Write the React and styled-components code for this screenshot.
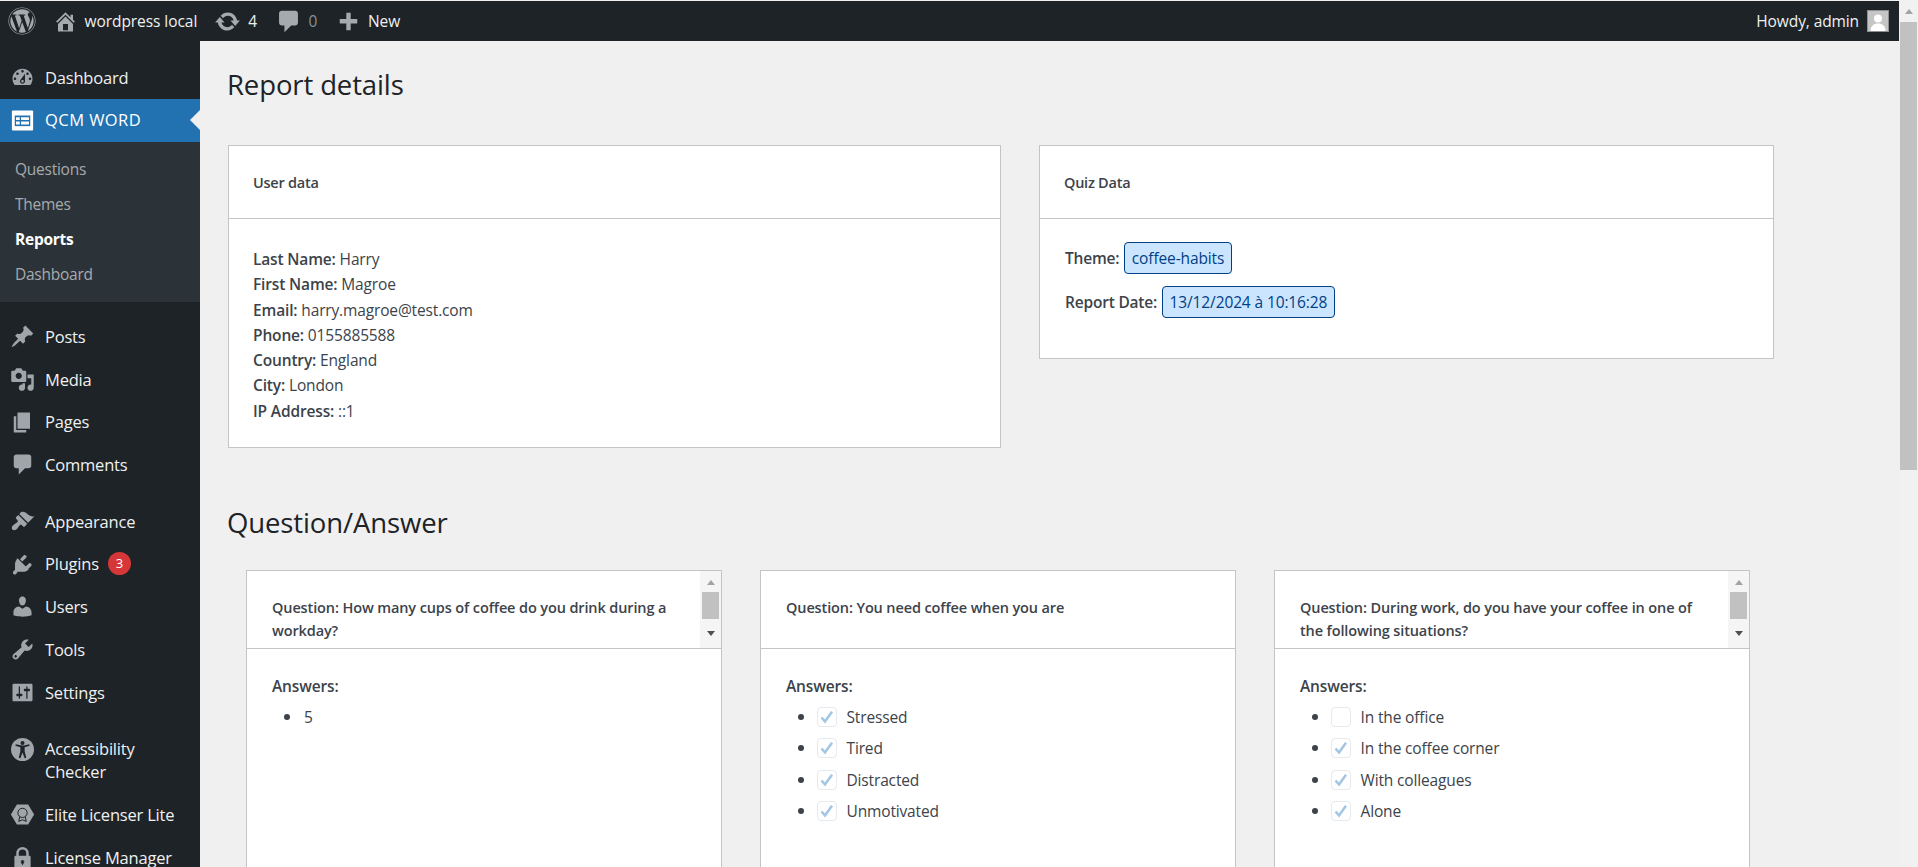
import styled, { createGlobalStyle } from "styled-components";
import { FaWordpress } from "react-icons/fa";

const ICONS = {
  home: "M16 8.5l1.53 1.53-1.06 1.06L10 4.62l-6.47 6.47-1.06-1.06L10 2.5l4 4v-2h2v4zm-6-2.46l6 5.99V18H4v-5.97zM12 17v-5H8v5h4z",
  update: "M10.2 3.28c3.53 0 6.43 2.61 6.92 6h2.08l-3.5 4-3.5-4h2.32c-.45-1.97-2.21-3.45-4.32-3.45-1.45 0-2.73.71-3.54 1.78L4.95 5.66C6.23 4.2 8.11 3.28 10.2 3.28zm-.4 13.44c-3.52 0-6.43-2.61-6.92-6H.8l3.5-4c1.17 1.33 2.33 2.67 3.5 4H5.48c.45 1.97 2.21 3.45 4.32 3.45 1.45 0 2.73-.71 3.54-1.78l1.71 1.95c-1.28 1.46-3.15 2.38-5.25 2.38z",
  comment: "M5 2h10c1.1 0 2 .9 2 2v7c0 1.1-.9 2-2 2h-3l-5 5v-5H5c-1.1 0-2-.9-2-2V4c0-1.1.9-2 2-2z",
  plus: "M17 8v3.5h-5.25V17h-3.5v-5.500H3V8h5.250V3h3.500v5H17z",
  dashboard: "M3.76 16h12.48c1.1-1.37 1.76-3.11 1.76-5 0-4.42-3.58-8-8-8s-8 3.58-8 8c0 1.89.66 3.63 1.76 5zM10 4c.55 0 1 .45 1 1s-.45 1-1 1-1-.45-1-1 .45-1 1-1zM6 6c.55 0 1 .45 1 1s-.45 1-1 1-1-.45-1-1 .45-1 1-1zm8 0c.55 0 1 .45 1 1s-.45 1-1 1-1-.45-1-1 .45-1 1-1zm-5.37 5.55L12 7v6c0 1.1-.9 2-2 2s-2-.9-2-2c0-.57.24-1.08.63-1.45zM4 10c.55 0 1 .45 1 1s-.45 1-1 1-1-.45-1-1 .45-1 1-1zm12 0c.55 0 1 .45 1 1s-.45 1-1 1-1-.45-1-1 .45-1 1-1zm-5 3c0-.55-.45-1-1-1s-1 .45-1 1 .45 1 1 1 1-.45 1-1z",
  post: "M10.44 3.02l1.82-1.82 6.36 6.35-1.83 1.82c-1.05-.68-2.48-.57-3.41.36l-.75.75c-.92.93-1.04 2.35-.35 3.41l-1.83 1.82-2.41-2.41-2.8 2.79c-.42.42-3.38 2.71-3.8 2.29s1.86-3.39 2.28-3.81l2.79-2.79L4.1 9.36l1.83-1.82c1.05.69 2.48.57 3.4-.36l.75-.75c.93-.92 1.05-2.35.36-3.41z",
  media: "M13 11V4c0-.55-.45-1-1-1h-1.67L9 1H5L3.67 3H2c-.55 0-1 .45-1 1v7c0 .55.45 1 1 1h10c.55 0 1-.45 1-1zM7 4.5c1.38 0 2.5 1.12 2.5 2.5S8.38 9.5 7 9.5 4.5 8.38 4.5 7 5.62 4.5 7 4.5zM14 6h5v10.5c0 1.38-1.12 2.5-2.5 2.5S14 17.88 14 16.5s1.12-2.5 2.5-2.5c.17 0 .34.02.5.05V9h-3V6zm-4 8.05V13h2v3.5c0 1.38-1.12 2.5-2.5 2.5S7 17.88 7 16.5 8.12 14 9.5 14c.17 0 .34.02.5.05z",
  page: "M6 15V2h10v13H6zm-1 1h8v2H3V5h2v11z",
  appearance: "M14.48 11.06L7.41 3.99l1.5-1.5c.5-.56 2.3-.47 3.51.32 1.21.8 1.43 1.28 2.91 2.1 1.18.64 2.45 1.26 4.23.91zm-.71.71L6.7 4.7 4.93 6.47c-.39.39-.39 1.02 0 1.41l1.06 1.06c.39.39.39 1.03 0 1.42-.6.6-1.43 1.11-2.21 1.69-.35.26-.7.53-1.01.84C1.43 13.71.96 15.5 1.9 16.44c.94.95 2.73.47 3.57-.37.31-.31.59-.66.84-1.01.58-.78 1.09-1.61 1.69-2.21.39-.39 1.02-.39 1.41 0l1.06 1.06c.39.39 1.02.39 1.41 0z",
  plugin: "M13.11 4.36L9.87 7.6 8 5.73l3.24-3.24c.35-.34 1.05-.2 1.56.32.52.51.66 1.21.31 1.55zm-8 1.77l.91-1.12 9.01 9.01-1.19.84c-.71.71-2.63 1.16-3.82 1H6.14L4.9 17.57c-.59.59-1.54.59-2.12 0-.59-.58-.59-1.53 0-2.12l1.24-1.24v-3.88c-.16-1.19.29-3.11 1-3.82zm12.03 4.78L13.9 14.15l-1.87-1.87 3.24-3.24c.34-.35 1.04-.21 1.55.31.52.51.66 1.21.32 1.55z",
  users: "M10 9.25c-2.27 0-2.73-3.44-2.73-3.44C7 4.02 7.82 2 9.97 2c2.16 0 2.98 2.02 2.71 3.81 0 0-.41 3.44-2.68 3.44zm0 2.57L12.72 10c2.39 0 4.52 2.33 4.52 4.53v2.49s-3.65 1.13-7.24 1.13c-3.65 0-7.24-1.13-7.24-1.13v-2.49c0-2.25 1.94-4.48 4.47-4.48z",
  tools: "M16.68 9.77c-1.34 1.34-3.3 1.67-4.95.99l-5.41 6.52c-.99.99-2.59.99-3.58 0s-.99-2.59 0-3.57l6.52-5.42c-.68-1.65-.35-3.61.99-4.95 1.28-1.28 3.12-1.62 4.72-1.06l-2.89 2.89 2.83 2.83 2.89-2.89c.56 1.6.22 3.44-1.06 4.72zM3.81 16.21c.4.39 1.03.39 1.42 0 .4-.4.4-1.03 0-1.43-.39-.39-1.02-.39-1.42 0-.39.4-.39 1.03 0 1.43z",
  settings: "M18 16V4c0-.55-.45-1-1-1H3c-.55 0-1 .45-1 1v12c0 .55.45 1 1 1h14c.55 0 1-.45 1-1zM8 11h1c.55 0 1 .45 1 1s-.45 1-1 1H8v1.5c0 .28-.22.5-.5.5s-.5-.22-.5-.5V13H6c-.55 0-1-.45-1-1s.45-1 1-1h1V5.5c0-.28.22-.5.5-.5s.5.22.5.5V11zm5-2h-1c-.55 0-1-.45-1-1s.45-1 1-1h1V5.5c0-.28.22-.5.5-.5s.5.22.5.5V7h1c.55 0 1 .45 1 1s-.45 1-1 1h-1v5.5c0 .28-.22.5-.5.5s-.5-.22-.5-.5V9z",
};

const GlobalStyle = createGlobalStyle`
  html, body {
    margin: 0;
    height: 100%;
    overflow: hidden;
    background: #f0f0f1;
  }
  * {
    box-sizing: border-box;
  }
`;

function Icon({ name, size = 25 }) {
  return (
    <svg width={size} height={size} viewBox="0 0 20 20" fill="currentColor">
      <path d={ICONS[name]} />
    </svg>
  );
}

function FormIcon() {
  return (
    <svg width="25" height="25" viewBox="0 0 20 20">
      <rect x="1.500" y="2" width="17" height="16" rx=".8" fill="#fff" />
      <path d="M3.800 6h12.400v8.500H3.800z" fill="#2271b1" />
      <path d="M4.800 7.300h3v2.300h-3zM8.800 7.300h6.400v2.300H8.800zM4.800 10.800h3v2.300h-3zM8.800 10.800h6.400v2.300H8.800z" fill="#fff" />
    </svg>
  );
}

function AccessIcon() {
  return (
    <svg width="25" height="25" viewBox="0 0 20 20">
      <circle cx="10" cy="10" r="9.200" fill="#a0a5aa" />
      <circle cx="10" cy="4.800" r="1.600" fill="#1d2327" />
      <path d="M4.300 7l4 1.100v3.200L7 16.500l1.300.4L10 12.400l1.700 4.500 1.300-.4-1.300-5.200V8.100l4-1.100-.3-1.200-4.200 1H9.500l-4.900-1z" fill="#1d2327" />
    </svg>
  );
}

function HexIcon() {
  return (
    <svg width="25" height="25" viewBox="0 0 20 20">
      <path d="M5.500 2h9l4.800 8-4.800 8h-9L.700 10z" fill="#a0a5aa" />
      <circle cx="10" cy="8.700" r="3.700" fill="none" stroke="#1d2327" strokeWidth=".8" />
      <path d="M7.800 11.800L7 15.500l3-1.300 3 1.300-.8-3.700" fill="none" stroke="#1d2327" strokeWidth=".8" />
    </svg>
  );
}

function LockIcon() {
  return (
    <svg width="25" height="25" viewBox="0 0 20 20">
      <path d="M6 9V6.500a4 4 0 0 1 8 0V9" fill="none" stroke="#a0a5aa" strokeWidth="2" />
      <rect x="3.500" y="8.500" width="13" height="10" rx="1" fill="#a0a5aa" />
      <path d="M9.200 12h1.600v1.200l.9 0-1.700 3-1.700-3h.9z" fill="#1d2327" />
    </svg>
  );
}

function AvatarIcon() {
  return (
    <svg width="20" height="20" viewBox="0 0 20 20">
      <rect width="20" height="20" fill="#c5c5c5" />
      <circle cx="10" cy="7.500" r="4" fill="#fff" />
      <path d="M2.500 20c0-5 3-7.500 7.500-7.500S17.500 15 17.500 20z" fill="#fff" />
    </svg>
  );
}

const MENU_TOP = [{ icon: <Icon name="dashboard" />, label: "Dashboard" }];

const MENU_BOTTOM = [
  { icon: <Icon name="post" />, label: "Posts", gap: 13 },
  { icon: <Icon name="media" />, label: "Media" },
  { icon: <Icon name="page" />, label: "Pages" },
  { icon: <Icon name="comment" />, label: "Comments" },
  { icon: <Icon name="appearance" />, label: "Appearance", gap: 14 },
  { icon: <Icon name="plugin" />, label: "Plugins", badge: 3 },
  { icon: <Icon name="users" />, label: "Users" },
  { icon: <Icon name="tools" />, label: "Tools" },
  { icon: <Icon name="settings" />, label: "Settings" },
  { icon: <AccessIcon />, label: "Accessibility Checker", gap: 15, tall: true },
  { icon: <HexIcon />, label: "Elite Licenser Lite" },
  { icon: <LockIcon />, label: "License Manager" },
];

const SUB_MENU = ["Questions", "Themes", "Reports", "Dashboard"];

const USER_DATA = [
  ["Last Name:", "Harry"],
  ["First Name:", "Magroe"],
  ["Email:", "harry.magroe@test.com"],
  ["Phone:", "0155885588"],
  ["Country:", "England"],
  ["City:", "London"],
  ["IP Address:", "::1"],
];

const QUESTIONS = [
  {
    title: "How many cups of coffee do you drink during a workday?",
    scroll: true,
    answers: [{ text: "5" }],
  },
  {
    title: "You need coffee when you are",
    answers: [
      { text: "Stressed", checked: true },
      { text: "Tired", checked: true },
      { text: "Distracted", checked: true },
      { text: "Unmotivated", checked: true },
    ],
  },
  {
    title: "During work, do you have your coffee in one of the following situations?",
    scroll: true,
    answers: [
      { text: "In the office", checked: false },
      { text: "In the coffee corner", checked: true },
      { text: "With colleagues", checked: true },
      { text: "Alone", checked: true },
    ],
  },
];

export default function App() {
  return (
    <>
      <GlobalStyle />
      <Page>
        <Viewport>
          <TopBar>
            <BarGroup>
              <LogoItem>
                <FaWordpress size={28} />
              </LogoItem>
              <BarItem $left={16.5}>
                <BarIcon><Icon name="home" /></BarIcon>
                <BarText>wordpress local</BarText>
              </BarItem>
              <BarItem $left={17}>
                <BarIcon><Icon name="update" size={27} /></BarIcon>
                <BarText>4</BarText>
              </BarItem>
              <BarItem $left={17.5}>
                <BarIcon><Icon name="comment" size={27} /></BarIcon>
                <BarText $dim>0</BarText>
              </BarItem>
              <BarItem $left={18.5}>
                <BarIcon><Icon name="plus" size={25} /></BarIcon>
                <BarText>New</BarText>
              </BarItem>
            </BarGroup>
            <Howdy>
              Howdy, admin
              <Avatar><AvatarIcon /></Avatar>
            </Howdy>
          </TopBar>
          <Body>
            <Sidebar>
              {MENU_TOP.map((m) => (
                <MenuItem key={m.label}>
                  <MenuIcon>{m.icon}</MenuIcon>
                  <MenuLabel>{m.label}</MenuLabel>
                </MenuItem>
              ))}
              <ActiveItem>
                <MenuIcon><FormIcon /></MenuIcon>
                <ActiveLabel>QCM WORD</ActiveLabel>
              </ActiveItem>
              <SubMenu>
                {SUB_MENU.map((s) => (
                  <SubItem key={s} $current={s === "Reports"}>{s}</SubItem>
                ))}
              </SubMenu>
              {MENU_BOTTOM.map((m) => (
                <MenuItem key={m.label} $gap={m.gap} $tall={m.tall}>
                  <MenuIcon>{m.icon}</MenuIcon>
                  <MenuLabel>
                    {m.label}
                    {m.badge && <Badge>{m.badge}</Badge>}
                  </MenuLabel>
                </MenuItem>
              ))}
            </Sidebar>
            <Main>
              <Title>Report details</Title>
              <InfoGrid>
                <Card>
                  <CardHeader>User data</CardHeader>
                  <UserBody>
                    {USER_DATA.map(([k, v]) => (
                      <div key={k}>
                        <Label>{k}</Label> {v}
                      </div>
                    ))}
                  </UserBody>
                </Card>
                <Card>
                  <CardHeader>Quiz Data</CardHeader>
                  <QuizBody>
                    <QuizRow>
                      <Label>Theme:</Label>
                      <Tag>coffee-habits</Tag>
                    </QuizRow>
                    <QuizRow>
                      <Label>Report Date:</Label>
                      <Tag>13/12/2024 à 10:16:28</Tag>
                    </QuizRow>
                  </QuizBody>
                </Card>
              </InfoGrid>
              <SectionTitle>Question/Answer</SectionTitle>
              <QuestionGrid>
                {QUESTIONS.map((q) => (
                  <QuestionCard key={q.title}>
                    <QuestionHeader>
                      {`Question: ${q.title}`}
                      {q.scroll && (
                        <MiniScroll>
                          <ArrowUp />
                          <MiniThumb />
                          <ArrowDown />
                        </MiniScroll>
                      )}
                    </QuestionHeader>
                    <QuestionBody>
                      <Label>Answers:</Label>
                      <Answers>
                        {q.answers.map((a) => (
                          <li key={a.text}>
                            {a.checked !== undefined && (
                              <CheckBox>
                                {a.checked && (
                                  <svg width="16" height="16" viewBox="0 0 16 16">
                                    <path d="M2.500 8.500L6 12.500 13 2.800" fill="none" stroke="#a3c6e4" strokeWidth="2.600" />
                                  </svg>
                                )}
                              </CheckBox>
                            )}
                            {a.text}
                          </li>
                        ))}
                      </Answers>
                    </QuestionBody>
                  </QuestionCard>
                ))}
              </QuestionGrid>
            </Main>
          </Body>
        </Viewport>
        <PageScroll>
          <ArrowUp />
          <PageThumb />
        </PageScroll>
      </Page>
    </>
  );
}

const FONT = `"Open Sans", "Noto Sans", sans-serif`;

const Page = styled.div`
  display: flex;
  height: 867px;
  overflow: hidden;
  background: #f0f0f1;
  font-family: ${FONT};
  color: #3c434a;
`;
const Viewport = styled.div`
  flex: 1;
  min-width: 0;
  padding-top: 1px;
`;
const TopBar = styled.div`
  height: 40px;
  background: #1d2327;
  color: #f0f0f1;
  display: flex;
  justify-content: space-between;
  align-items: center;
  padding: 0 10px 0 8px;
`;
const BarGroup = styled.div`
  display: flex;
  align-items: center;
`;
const LogoItem = styled.div`
  display: flex;
  color: #a7aaad;
`;
const BarItem = styled.div`
  display: flex;
  align-items: center;
  gap: 7px;
  margin-left: ${(p) => p.$left}px;
`;
const BarIcon = styled.span`
  display: flex;
  color: #a7aaad;
`;
const BarText = styled.span`
  font-size: 15.500px;
  letter-spacing: -0.06px;
  color: ${(p) => (p.$dim ? "#8c8f94" : "#f0f0f1")};
`;
const Howdy = styled.div`
  display: flex;
  align-items: center;
  gap: 8px;
  font-size: 15.500px;
  letter-spacing: -0.1px;
`;
const Avatar = styled.span`
  display: flex;
  border: 1px solid #8c8f94;
`;
const Body = styled.div`
  display: flex;
  height: 826px;
`;
const Sidebar = styled.aside`
  width: 200px;
  flex-shrink: 0;
  background: #1d2327;
  padding-top: 15px;
`;
const MenuItem = styled.div`
  display: flex;
  align-items: ${(p) => (p.$tall ? "flex-start" : "center")};
  gap: 10px;
  min-height: 42.700px;
  padding: ${(p) => (p.$tall ? "8px 0 10px 10px" : "0 0 0 10px")};
  margin-top: ${(p) => p.$gap || 0}px;
  color: #f0f0f1;
`;
const ActiveItem = styled(MenuItem)`
  position: relative;
  min-height: 43px;
  background: #2271b1;
  color: #fff;
  &::after {
    content: "";
    position: absolute;
    right: 0;
    top: 50%;
    margin-top: -10px;
    border: 10px solid transparent;
    border-right-color: #f0f0f1;
  }
`;
const MenuIcon = styled.span`
  display: flex;
  color: #a0a5aa;
  flex-shrink: 0;
`;
const MenuLabel = styled.span`
  font-size: 16.500px;
  line-height: 23.500px;
  letter-spacing: -0.2px;
  width: 145px;
`;
const ActiveLabel = styled(MenuLabel)`
  letter-spacing: 0.45px;
`;
const Badge = styled.span`
  display: inline-flex;
  align-items: center;
  justify-content: center;
  width: 23px;
  height: 23px;
  margin-left: 9px;
  border-radius: 50%;
  background: #d63638;
  color: #fff;
  font-size: 13px;
  letter-spacing: 0;
  vertical-align: top;
`;
const SubMenu = styled.div`
  background: #2c3338;
  padding: 10px 0 10px;
`;
const SubItem = styled.div`
  height: 35.200px;
  line-height: 35.200px;
  padding-left: 15px;
  font-size: 15.500px;
  letter-spacing: -0.25px;
  font-weight: ${(p) => (p.$current ? 700 : 400)};
  color: ${(p) => (p.$current ? "#fff" : "#a7aaad")};
`;
const Main = styled.main`
  flex: 1;
  min-width: 0;
  padding: 24px 0 0 28px;
`;
const Title = styled.h1`
  margin: 0 0 41px;
  height: 39px;
  font-size: 27.500px;
  line-height: 39px;
  font-weight: 400;
  letter-spacing: -0.12px;
  text-indent: -1px;
  color: #1d2327;
`;
const InfoGrid = styled.div`
  display: grid;
  grid-template-columns: 773px 735px;
  column-gap: 38px;
  align-items: start;
`;
const Card = styled.section`
  background: #fff;
  border: 1px solid #c3c4c7;
`;
const CardHeader = styled.div`
  height: 73px;
  display: flex;
  align-items: center;
  padding-left: 24px;
  border-bottom: 1px solid #c3c4c7;
  font-size: 14.500px;
  font-weight: 600;
  letter-spacing: -0.25px;
`;
const UserBody = styled.div`
  padding: 28px 24px 23px;
  font-size: 15.500px;
  line-height: 25.300px;
  letter-spacing: -0.15px;
`;
const QuizBody = styled.div`
  padding: 23px 25px 40px;
  font-size: 15.500px;
  letter-spacing: -0.2px;
  display: flex;
  flex-direction: column;
  gap: 12px;
`;
const QuizRow = styled.div`
  display: flex;
  align-items: center;
  gap: 4.500px;
`;
const Label = styled.strong`
  font-weight: 600;
`;
const Tag = styled.span`
  display: inline-block;
  padding: 4px 7px;
  line-height: 22px;
  letter-spacing: -0.12px;
  background: #cce5ff;
  border: 1px solid #004085;
  border-radius: 4px;
  color: #004085;
`;
const SectionTitle = styled.h2`
  margin: 55px 0 0;
  height: 40px;
  font-size: 27.500px;
  line-height: 40px;
  font-weight: 400;
  letter-spacing: -0.12px;
  text-indent: -1px;
  color: #1d2327;
`;
const QuestionGrid = styled.div`
  display: grid;
  grid-template-columns: repeat(3, 476px);
  column-gap: 38px;
  margin: 27px 0 0 18px;
`;
const QuestionCard = styled.section`
  background: #fff;
  border: 1px solid #c3c4c7;
  height: 420px;
`;
const QuestionHeader = styled.div`
  position: relative;
  height: 78px;
  padding: 24.500px 50px 0 25px;
  border-bottom: 1px solid #c3c4c7;
  font-size: 14.500px;
  line-height: 23px;
  font-weight: 600;
  letter-spacing: -0.12px;
`;
const MiniScroll = styled.div`
  position: absolute;
  top: 0;
  right: 0;
  bottom: 0;
  width: 21px;
  background: #f5f5f5;
  display: flex;
  flex-direction: column;
  align-items: center;
  padding-top: 9px;
`;
const ArrowUp = styled.span`
  width: 0;
  height: 0;
  border: 4.500px solid transparent;
  border-top: 0;
  border-bottom: 5px solid #a3a3a3;
`;
const ArrowDown = styled.span`
  width: 0;
  height: 0;
  margin-top: 12px;
  border: 4.500px solid transparent;
  border-bottom: 0;
  border-top: 5px solid #505050;
`;
const MiniThumb = styled.span`
  width: 17px;
  height: 27px;
  margin-top: 7px;
  background: #c1c1c1;
`;
const QuestionBody = styled.div`
  padding: 26px 25px;
  font-size: 15.500px;
  letter-spacing: -0.15px;
  line-height: 22px;
`;
const Answers = styled.ul`
  margin: 4.400px 0 0;
  padding: 0 0 0 12px;
  list-style: none;
  li {
    display: flex;
    align-items: center;
    height: 31.300px;
  }
  li::before {
    content: "";
    width: 6px;
    height: 6px;
    margin-right: 14px;
    border-radius: 50%;
    background: #3c434a;
  }
`;
const CheckBox = styled.span`
  display: flex;
  align-items: center;
  justify-content: center;
  width: 20px;
  height: 20px;
  margin: 0 9.500px 0 -1px;
  border: 1px solid #e6e9ee;
  border-radius: 4px;
  background: #fff;
`;
const PageScroll = styled.div`
  width: 19px;
  flex-shrink: 0;
  background: #f1f1f1;
  display: flex;
  flex-direction: column;
  align-items: center;
  padding-top: 9px;
`;
const PageThumb = styled.div`
  width: 17px;
  height: 448px;
  margin-top: 8px;
  background: #c1c1c1;
`;
